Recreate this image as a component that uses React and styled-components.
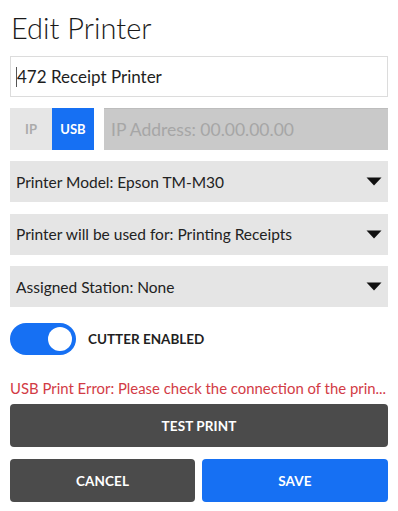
import React from "react";
import styled, { createGlobalStyle } from "styled-components";

const Global = createGlobalStyle`
  * { box-sizing: border-box; }
  body { margin: 0; background: #fff; font-family: "Lato", "Open Sans", sans-serif; }
`;

const Page = styled.div`
  width: 398px;
  padding: 10px 10px 0 10px;
  display: flex;
  flex-direction: column;
`;

const Title = styled.h1`
  margin: 0;
  font-size: 29px;
  font-weight: 300;
  color: #1a1a1a;
  line-height: 36px;
  padding-left: 1px;
`;

const NameInput = styled.div`
  margin-top: 10px;
  height: 41px;
  border: 1px solid #dcdcdc;
  display: flex;
  align-items: center;
  padding-left: 5px;
  font-size: 17px;
  color: #1e1e1e;
`;

const Caret = styled.span`
  width: 1px;
  height: 20px;
  background: #555;
`;

const ConnRow = styled.div`
  margin-top: 11px;
  display: flex;
  height: 42px;
`;

const Seg = styled.div`
  width: 42px;
  display: flex;
  align-items: center;
  justify-content: center;
  font-size: 13px;
  font-weight: 700;
  background: ${(p) => (p.$active ? "#1670f3" : "#e6e6e6")};
  color: ${(p) => (p.$active ? "#fff" : "#ababab")};
`;

const AddressField = styled.div`
  flex: 1;
  margin-left: 10px;
  background: #c9c9c9;
  border-top: 1px solid #bdbdbd;
  display: flex;
  align-items: center;
  padding-left: 7px;
  font-size: 17.5px;
  color: #a6a6a6;
`;

const Selects = styled.div`
  margin-top: 11px;
  display: flex;
  flex-direction: column;
  gap: 11.5px;
`;

const Select = styled.div`
  height: 41px;
  background: #e5e5e5;
  display: flex;
  align-items: center;
  justify-content: space-between;
  padding: 0 6px 0 6px;
  font-size: 15.5px;
  color: #222;
`;

const Arrow = () => (
  <svg width="16" height="9" viewBox="0 0 16 9">
    <path d="M0.5 0.5 H15.5 L8 8.5 Z" fill="#111" />
  </svg>
);

const ToggleRow = styled.div`
  margin-top: 16px;
  display: flex;
  align-items: center;
  gap: 12px;
`;

const Toggle = styled.div`
  width: 66px;
  height: 32px;
  border-radius: 16px;
  background: #1670f3;
  display: flex;
  align-items: center;
  justify-content: flex-end;
  padding-right: 4px;
`;

const Knob = styled.div`
  width: 24px;
  height: 24px;
  border-radius: 50%;
  background: #fff;
`;

const ToggleLabel = styled.span`
  font-size: 13.5px;
  font-weight: 700;
  color: #1f1f1f;
`;

const ErrorText = styled.div`
  margin-top: 22px;
  font-size: 14.9px;
  color: #d23b45;
  white-space: nowrap;
  line-height: 22px;
`;

const Button = styled.button`
  height: 43px;
  border: none;
  border-radius: 4px;
  background: ${(p) => (p.$primary ? "#1670f3" : "#4b4b4b")};
  color: #fff;
  font-family: inherit;
  font-size: 13.5px;
  font-weight: 700;
  letter-spacing: 0.1px;
`;

const TestButton = styled(Button)`
  margin-top: 5px;
  width: 100%;
`;

const ButtonRow = styled.div`
  margin-top: 12px;
  display: grid;
  grid-template-columns: 185px 1fr;
  gap: 7px;
`;

export default function App() {
  return (
    <>
      <Global />
      <Page>
        <Title>Edit Printer</Title>
        <NameInput>
          <Caret />
          472 Receipt Printer
        </NameInput>
        <ConnRow>
          <Seg>IP</Seg>
          <Seg $active>USB</Seg>
          <AddressField>IP Address: 00.00.00.00</AddressField>
        </ConnRow>
        <Selects>
          <Select>
            <span>Printer Model: Epson TM-M30</span>
            <Arrow />
          </Select>
          <Select>
            <span>Printer will be used for: Printing Receipts</span>
            <Arrow />
          </Select>
          <Select>
            <span>Assigned Station: None</span>
            <Arrow />
          </Select>
        </Selects>
        <ToggleRow>
          <Toggle>
            <Knob />
          </Toggle>
          <ToggleLabel>CUTTER ENABLED</ToggleLabel>
        </ToggleRow>
        <ErrorText>USB Print Error: Please check the connection of the prin...</ErrorText>
        <TestButton>TEST PRINT</TestButton>
        <ButtonRow>
          <Button>CANCEL</Button>
          <Button $primary>SAVE</Button>
        </ButtonRow>
      </Page>
    </>
  );
}
